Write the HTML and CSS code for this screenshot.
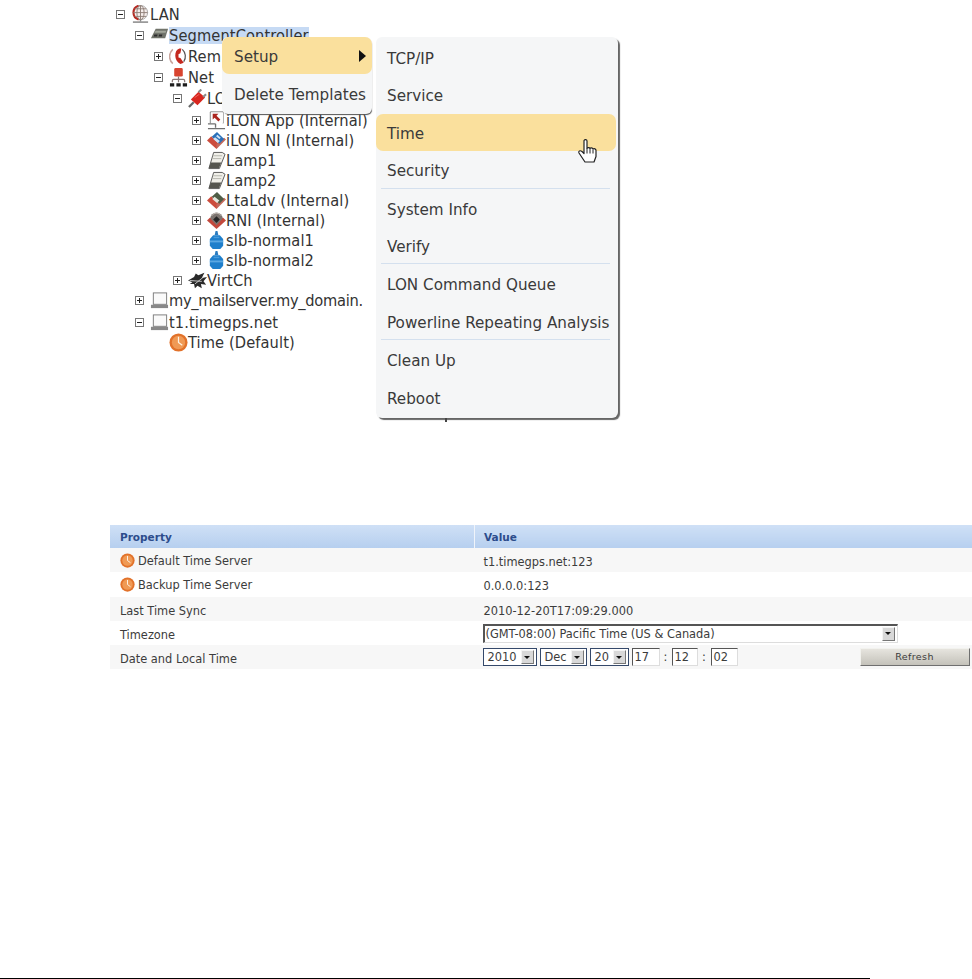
FILE: index.html
```html
<!DOCTYPE html>
<html lang="en">
<head>
<meta charset="utf-8">
<title>Segment Controller Time Setup</title>
<link rel="stylesheet" href="styles.css">
</head>
<body>
<svg class="defs" width="0" height="0" aria-hidden="true">
  <symbol id="minus" viewBox="0 0 9 9"><rect x=".5" y=".5" width="8" height="8" fill="#fff" stroke="#777"/><path d="M2 4.500h5" stroke="#222"/></symbol>
  <symbol id="plus" viewBox="0 0 9 9"><rect x=".5" y=".5" width="8" height="8" fill="#fff" stroke="#777"/><path d="M2 4.500h5M4.500 2v5" stroke="#222"/></symbol>
  <symbol id="globe" viewBox="0 0 20 20"><circle cx="10" cy="8" r="7.500" fill="#f6eeec" stroke="#a9a9a9"/><path d="M8 .8A7.500 7.500 0 0 0 8 15.200" fill="none" stroke="#b52a22" stroke-width="2.200"/><path d="M2.500 8h15M10 .5v15M4 4h12M4 12h12" stroke="#8f8078" fill="none"/><ellipse cx="10" cy="8" rx="3.800" ry="7.500" fill="none" stroke="#8f8078"/><path d="M10 15.500v2" stroke="#8a8a8a" stroke-width="1.500"/><path d="M2 18h16" stroke="#8a8a8a" stroke-width="1.600"/></symbol>
  <symbol id="device" viewBox="0 0 20 20"><path d="M6 3h13l-3 10H1z" fill="#70736a"/><path d="M6 5h11l-.6 2H4.600z" fill="#a2a69a"/><path d="M4.500 9h3.500l-.5 2H4zM9.500 9h3.500l-.5 2H9z" fill="#2c2c2c"/></symbol>
  <symbol id="phone" viewBox="0 0 20 20"><path d="M4 2.500a10 10 0 0 0 0 15" fill="none" stroke="#c9a49c" stroke-width="1.600"/><path d="M11 1.500c-6 1.500-6 13 1 16.500l3.500-1.500-3.500-5-2-.5V7.500l2-1 1-5z" fill="#c4281e"/><path d="M14 2.500a10 10 0 0 1 1.500 13" fill="none" stroke="#555" stroke-width="1.300"/></symbol>
  <symbol id="net" viewBox="0 0 20 20"><rect x="5.500" y="0" width="9" height="9" rx="1.500" fill="#d8442f"/><path d="M10 9v3M3.500 15v-1.500q0-1.500 1.500-1.500h10q1.500 0 1.500 1.500V15M10 12v3" stroke="#8a7a78" stroke-width="1.300" fill="none"/><path d="M1 16h4.500v3.500H1zM7.800 16h4.500v3.500H7.800zM14.500 16H19v3.500h-4.500z" fill="#1d1d1d"/></symbol>
  <symbol id="plug" viewBox="0 0 20 20"><path d="M1 19l5-5" stroke="#666" stroke-width="2.400"/><path d="M3 11l8-8 7 6-8 8z" fill="#d8261f"/><path d="M7 9l5-3.500" stroke="#f06a60"/><path d="M11 3.500l3-3M16 8.500l3-3" stroke="#8b8b8b" stroke-width="2.200"/></symbol>
  <symbol id="app" viewBox="0 0 20 20"><path d="M3.500 1h13.500M3.500 1v12M17 1v12" stroke="#6b6b6b" fill="none"/><rect x="4" y="1.500" width="13" height="11" fill="#fcfcfc"/><path d="M6 3h6L10 5l4 4-2 2-4-4-2 2z" fill="#ab241d"/><path d="M1 13.500h8M9 13.500v4M1 18.500h18" stroke="#707070" stroke-width="1.400" fill="none"/></symbol>
  <symbol id="diamond" viewBox="0 0 20 20"><path d="M0 10l4.500-4.500 8.500 8.500-3 5z" fill="#cc4c3d"/><path d="M10 19l10-10-2-2-8 7z" fill="#c2695d"/><path d="M5 6l5.500-5 7.500 7.500-5 5z" fill="#2a70b8"/><path d="M8.500 6.500l5 4-2 2-5-4zM11 4l3.500 3-1.500 1.500-3.500-3z" fill="#cfe2f4"/></symbol>
  <symbol id="diamond2" viewBox="0 0 20 20"><path d="M0 10l4.500-4.500 8.500 8.500-3 5z" fill="#cc4c3d"/><path d="M10 19l10-10-2-2-8 7z" fill="#c2695d"/><path d="M5 6l5.500-5 7.500 7.500-5 5z" fill="#4e5d46"/><path d="M8 6l5 4-2.500 2.500-5-4z" fill="#e2e6dc"/></symbol>
  <symbol id="diamond3" viewBox="0 0 20 20"><path d="M0 10l10 9 10-9-3-3H3z" fill="#c2483c"/><path d="M3.500 8a6.500 6.500 0 0 1 13 0L10 15z" fill="#7c7470"/><path d="M6.500 9L10 5.500 13.500 9 10 12.500z" fill="#262626"/><path d="M5 5a6 6 0 0 1 10 0" fill="none" stroke="#c9c2bc"/></symbol>
  <symbol id="lamp" viewBox="0 0 20 20"><path d="M7 1.500h9l3 2-6 15H2z" fill="#f0efe9" stroke="#555"/><path d="M4 12h11l-2.300 6H2z" fill="#55554f"/><path d="M6 5h10M5 8h10" stroke="#b5b5ad"/></symbol>
  <symbol id="knob" viewBox="0 0 20 20"><path d="M9 0h2l1 4.500H8z" fill="#2a7cc0"/><path d="M3 8.500L6.500 4.500h7L17 8.500v7L14 19H6l-3-3.500z" fill="#1f7fcb"/><path d="M3 10h14v2H3z" fill="#5ba8e2"/><path d="M7 6h6v1.500H7z" fill="#4a9cdb"/></symbol>
  <symbol id="gear" viewBox="0 0 22 20"><path d="M0 10l7-4 2-4 3 2 7-3-3 6 6-1-4 5 3 4-6-1 1 5-5-3-3 3-1-5H2l3-2z" fill="#2a2a2a"/><path d="M2 10l14 1M8 14l10-8" stroke="#d5d5d5"/></symbol>
  <symbol id="laptop" viewBox="0 0 20 20"><rect x="3.500" y="2" width="14" height="12" fill="#fafafa" stroke="#7c7c7c"/><path d="M1 14.500h18V18H1z" fill="#888"/></symbol>
  <symbol id="clock" viewBox="0 0 20 20"><circle cx="10" cy="10" r="9.500" fill="#e2722a"/><circle cx="10" cy="10" r="7" fill="#f09a55"/><path d="M10 4v6l4 3" stroke="#fff3e4" stroke-width="1.300" fill="none"/></symbol>
</svg>

<main class="page">
  <section class="tree">
    <div class="row tall"><svg class="tog"><use href="#minus"/></svg><svg class="ico"><use href="#globe"/></svg><span>LAN</span></div>
    <div class="row tall l1"><svg class="tog"><use href="#minus"/></svg><svg class="ico"><use href="#device"/></svg><span class="selected">SegmentController</span></div>
    <div class="row tall l2"><svg class="tog"><use href="#plus"/></svg><svg class="ico"><use href="#phone"/></svg><span>Rem</span></div>
    <div class="row tall l2"><svg class="tog"><use href="#minus"/></svg><svg class="ico"><use href="#net"/></svg><span>Net</span></div>
    <div class="row tall l3 gap"><svg class="tog"><use href="#minus"/></svg><svg class="ico"><use href="#plug"/></svg><span>LON</span></div>
    <div class="row l4"><svg class="tog"><use href="#plus"/></svg><svg class="ico"><use href="#app"/></svg><span>iLON App (Internal)</span></div>
    <div class="row l4"><svg class="tog"><use href="#plus"/></svg><svg class="ico"><use href="#diamond"/></svg><span>iLON NI (Internal)</span></div>
    <div class="row l4"><svg class="tog"><use href="#plus"/></svg><svg class="ico"><use href="#lamp"/></svg><span>Lamp1</span></div>
    <div class="row l4"><svg class="tog"><use href="#plus"/></svg><svg class="ico"><use href="#lamp"/></svg><span>Lamp2</span></div>
    <div class="row l4"><svg class="tog"><use href="#plus"/></svg><svg class="ico"><use href="#diamond2"/></svg><span>LtaLdv (Internal)</span></div>
    <div class="row l4"><svg class="tog"><use href="#plus"/></svg><svg class="ico"><use href="#diamond3"/></svg><span>RNI (Internal)</span></div>
    <div class="row l4"><svg class="tog"><use href="#plus"/></svg><svg class="ico"><use href="#knob"/></svg><span>slb-normal1</span></div>
    <div class="row l4"><svg class="tog"><use href="#plus"/></svg><svg class="ico"><use href="#knob"/></svg><span>slb-normal2</span></div>
    <div class="row l3"><svg class="tog"><use href="#plus"/></svg><svg class="ico"><use href="#gear"/></svg><span>VirtCh</span></div>
    <div class="row l1 gap2"><svg class="tog"><use href="#plus"/></svg><svg class="ico"><use href="#laptop"/></svg><span class="tight">my_mailserver.my_domain.</span></div>
    <div class="row l1"><svg class="tog"><use href="#minus"/></svg><svg class="ico"><use href="#laptop"/></svg><span>t1.timegps.net</span></div>
    <div class="row l2"><span class="tog"></span><svg class="ico"><use href="#clock"/></svg><span>Time (Default)</span></div>

    <nav class="menu menu-main">
      <div class="item active">Setup<i class="caret"></i></div>
      <div class="item">Delete Templates</div>
    </nav>

    <nav class="menu menu-sub">
      <div class="item">TCP/IP</div>
      <div class="item">Service</div>
      <div class="item active">Time</div>
      <div class="item">Security</div>
      <hr class="sep">
      <div class="item">System Info</div>
      <div class="item">Verify</div>
      <hr class="sep">
      <div class="item">LON Command Queue</div>
      <div class="item">Powerline Repeating Analysis</div>
      <hr class="sep">
      <div class="item">Clean Up</div>
      <div class="item">Reboot</div>
      <svg class="hand" viewBox="0 0 22 26"><path d="M7 2c1-1.500 3-1 3 .5V10c0-1 2.500-1.500 3 0 .5-1 2.500-1 3 .5 1-.5 3-.5 3 1.500v6l-2 5.500H8l-6-9c-1-2 1-3 3-1.500l2 2z" fill="#fff" stroke="#222" stroke-width="1.200" stroke-linejoin="round"/><path d="M10 10v5M13 10.500V15M16 11v4" stroke="#222" fill="none"/></svg>
    </nav>
  </section>

  <table class="props">
    <thead>
      <tr><th class="c1">Property</th><th>Value</th></tr>
    </thead>
    <tbody>
      <tr class="odd"><td><svg class="mini"><use href="#clock"/></svg>Default Time Server</td><td class="low">t1.timegps.net:123</td></tr>
      <tr class="r25"><td><svg class="mini"><use href="#clock"/></svg>Backup Time Server</td><td class="low">0.0.0.0:123</td></tr>
      <tr class="odd"><td class="low">Last Time Sync</td><td class="low">2010-12-20T17:09:29.000</td></tr>
      <tr><td class="low">Timezone</td><td><div class="select wide"><span class="val">(GMT-08:00) Pacific Time (US &amp; Canada)</span><i class="arrow"></i></div></td></tr>
      <tr class="odd"><td class="low">Date and Local Time</td><td>
        <div class="dateline">
          <div class="select year"><span class="val">2010</span><i class="arrow"></i></div>
          <div class="select month"><span class="val">Dec</span><i class="arrow"></i></div>
          <div class="select day"><span class="val">20</span><i class="arrow"></i></div>
          <div class="time t-hour">17</div><span class="colon">:</span>
          <div class="time t-min">12</div><span class="colon c2">:</span>
          <div class="time t-sec">02</div>
          <div class="refresh">Refresh</div>
        </div>
      </td></tr>
    </tbody>
  </table>

  <div class="rule"></div>
</main>
</body>
</html>
```

FILE: styles.css
```css
html, body {
  margin: 0;
  padding: 0;
  background: #fff;
  overflow: hidden;
}
.defs { position: absolute; }
.page {
  height: 979px;
  display: flex;
  flex-direction: column;
  font-family: "DejaVu Sans Condensed", "DejaVu Sans", sans-serif;
  color: #333;
}

/* tree */
.tree {
  position: relative;
  height: 525px;
  flex: none;
  box-sizing: border-box;
  padding-top: 4px;
  font-size: 16.3px;
  letter-spacing: .1px;
}
.row {
  display: flex;
  align-items: center;
  height: 20px;
  padding-left: 115px;
  white-space: nowrap;
}
.row.tall { height: 21px; }
.row.gap { margin-bottom: 1px; }
.row.gap2 { margin-bottom: 2px; }
.l1 { padding-left: 134px; }
.l2 { padding-left: 153px; }
.l3 { padding-left: 172px; }
.l4 { padding-left: 191px; }
.tog { width: 9px; height: 9px; margin: 0 6px 0 1px; flex: none; }
.ico { width: 19px; height: 19px; flex: none; }
.selected { background: #c6daf4; line-height: 17px; }
.tight { letter-spacing: -.3px; }

/* menus */
.menu {
  position: absolute;
  background: #f5f6f7;
  border-radius: 6px;
  color: #3a3a3a;
  font-family: "DejaVu Sans", sans-serif;
  font-size: 15.2px;
  letter-spacing: 0;
}
.menu-main {
  left: 222px;
  top: 37px;
  width: 150px;
  height: 77px;
  box-shadow: 1px 2px 1px -1px #555;
}
.menu-main .item + .item { margin-top: 1px; }
.menu-sub {
  left: 376px;
  top: 37px;
  width: 242px;
  height: 381px;
  box-sizing: border-box;
  padding-top: 2px;
  box-shadow: 2px 2px 1px #666;
}
.menu-sub::after {
  content: "";
  position: absolute;
  left: 69px;
  top: 100%;
  width: 2px;
  height: 4px;
  background: #444;
}
.item {
  height: 37.4px;
  line-height: 40.4px;
  padding-left: 12px;
  border-radius: 7px;
  white-space: nowrap;
  position: relative;
}
.menu-sub .item { padding-left: 11px; }
.item.active { background: #fae09d; }
.menu-sub .item.active { margin-right: 2px; }
.caret {
  position: absolute;
  right: 6px;
  top: 13px;
  border-left: 7px solid #111;
  border-top: 6px solid transparent;
  border-bottom: 6px solid transparent;
}
.sep {
  height: 1px;
  border: 0;
  margin: -1px 8px 1px 5px;
  background: #d4e0ee;
}
.hand {
  position: absolute;
  left: 201px;
  top: 101px;
  width: 22px;
  height: 27px;
}

/* table */
.props {
  flex: none;
  margin-left: 110px;
  width: 862px;
  table-layout: fixed;
  border-collapse: collapse;
  font-family: "DejaVu Sans", sans-serif;
  font-size: 11.4px;
  color: #3c3c3c;
}
.props th {
  height: 23px;
  padding: 0 0 0 9px;
  text-align: left;
  font-size: 10.5px;
  color: #2c4c8c;
  background: linear-gradient(#cfe0f6, #b6cfef);
}
.props th.c1 { width: 354px; padding-left: 10px; border-right: 1px solid #f0f4fa; }
.props td { box-sizing: border-box; height: 24px; padding: 0 0 0 9px; }
.props td:first-child { padding-left: 10px; }
.props td.low { padding-top: 3px; }
.props tr.r25 td { height: 25px; }
.odd { background: #f7f7f7; }
.mini { width: 15px; height: 15px; margin-right: 3px; vertical-align: -3px; }

.select {
  display: inline-flex;
  flex: none;
  align-items: center;
  justify-content: space-between;
  height: 18px;
  box-sizing: border-box;
  background: #fff;
  border: 1px solid #34486a;
  padding: 0 2px 0 4px;
}
.select.wide {
  display: flex;
  margin-left: -1px;
  width: 415px;
  height: 19px;
  border-color: #555 #ddd #ddd #555;
  border-width: 2px 1px 1px 2px;
  padding-left: 1px;
}
.year { width: 54px; }
.month { width: 47px; }
.day { width: 39px; }
.arrow {
  display: flex;
  align-items: center;
  justify-content: center;
  flex: none;
  width: 11px;
  height: 12px;
  background: #d8d8d8;
  border: 1px solid;
  border-color: #f4f4f4 #777 #777 #f4f4f4;
}
.arrow::after {
  content: "";
  border-top: 3px solid #111;
  border-left: 3px solid transparent;
  border-right: 3px solid transparent;
}
.dateline {
  display: flex;
  align-items: center;
  gap: 3px;
  margin-left: -1px;
  white-space: nowrap;
}
.time {
  flex: none;
  height: 18px;
  box-sizing: border-box;
  background: #fff;
  border: 1px solid;
  border-color: #555 #ddd #ddd #555;
  padding-left: 2px;
  line-height: 17px;
}
.t-hour { width: 28px; }
.t-min { width: 26px; }
.t-sec { width: 27px; }
.colon { flex: none; width: 6px; text-align: center; }
.colon.c2 { width: 7px; }
.refresh {
  flex: none;
  margin-left: 119px;
  width: 110px;
  height: 18px;
  box-sizing: border-box;
  line-height: 16px;
  text-align: center;
  font-size: 9.5px;
  letter-spacing: .4px;
  background: linear-gradient(#e6e4de, #c4c2ba);
  border: 1px solid;
  border-color: #f2f2ee #6f6f6f #6f6f6f #f2f2ee;
}

.rule {
  margin-top: auto;
  width: 870px;
  height: 1px;
  background: #000;
}
```
